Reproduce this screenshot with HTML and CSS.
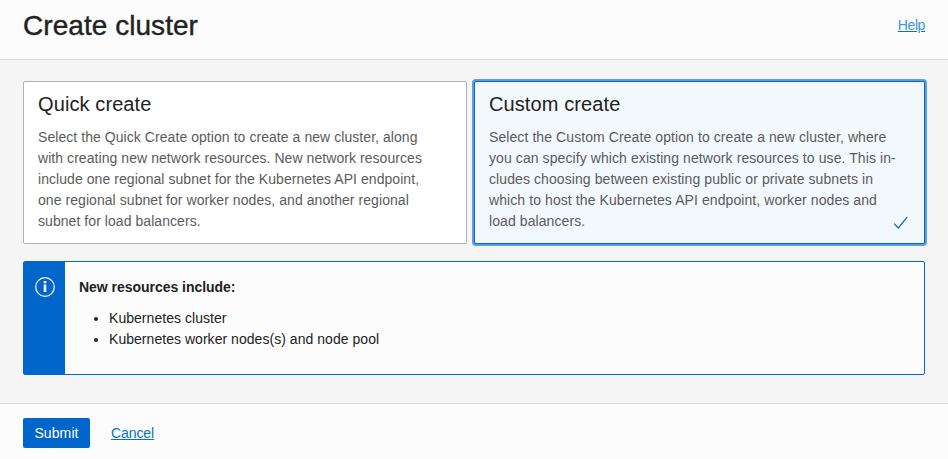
FILE: index.html
```html
<!DOCTYPE html>
<html lang="en">
<head>
<meta charset="utf-8">
<title>Create cluster</title>
<link rel="stylesheet" href="styles.css">
</head>
<body>
<header class="header">
  <h1 class="title">Create cluster</h1>
  <a class="help" href="#">Help</a>
</header>
<main class="main">
  <div class="options">
    <section class="card">
      <h2 class="card-title">Quick create</h2>
      <p class="card-text">Select the Quick Create option to create a new cluster, along<br>with creating new network resources. New network resources<br>include one regional subnet for the Kubernetes API endpoint,<br>one regional subnet for worker nodes, and another regional<br>subnet for load balancers.</p>
    </section>
    <section class="card card-selected">
      <h2 class="card-title">Custom create</h2>
      <p class="card-text">Select the Custom Create option to create a new cluster, where<br>you can specify which existing network resources to use. This in-<br>cludes choosing between existing public or private subnets in<br>which to host the Kubernetes API endpoint, worker nodes and<br>load balancers.</p>
      <svg class="check" width="16" height="14" viewBox="0 0 16 14"><path d="M1.2 7.6 5.2 12 14.2 1.2" fill="none" stroke="#0572ce" stroke-width="1.3"/></svg>
    </section>
  </div>
  <section class="info">
    <div class="info-side">
      <svg width="20" height="20" viewBox="0 0 20 20"><circle cx="10" cy="10" r="9.3" fill="none" stroke="#fff" stroke-width="1.2"/><path d="M8.7 4h2.6v2.2H8.7zM8.7 7.6h2.6v7.4H8.7z" fill="#fff"/></svg>
    </div>
    <div class="info-body">
      <p class="info-title">New resources include:</p>
      <ul class="info-list">
        <li>Kubernetes cluster</li>
        <li>Kubernetes worker nodes(s) and node pool</li>
      </ul>
    </div>
  </section>
</main>
<footer class="footer">
  <button class="submit" type="button">Submit</button>
  <a class="cancel" href="#">Cancel</a>
</footer>
</body>
</html>
```
FILE: styles.css
```css
* { box-sizing: border-box; }
body {
  margin: 0;
  height: 459px;
  display: flex;
  flex-direction: column;
  overflow: hidden;
  background: #f5f5f5;
  color: #222;
  font: 14px/21px "Liberation Sans", Arial, sans-serif;
}
h1, h2, p, ul { margin: 0; font-weight: 400; }
.header {
  height: 60px;
  padding: 0 23px;
  display: flex;
  justify-content: space-between;
  background: #fcfcfc;
  border-bottom: 1px solid #dedede;
}
.title {
  font-size: 28px;
  line-height: 34px;
  margin-top: 9px;
  letter-spacing: 0.05px;
  -webkit-text-stroke: 0.4px #222;
}
.help {
  color: #3f93da;
  text-decoration-color: #0572ce;
  letter-spacing: -0.4px;
  margin-top: 15px;
}
.main { height: 343px; padding: 21px 23px 0; }
.options { display: flex; gap: 7px; }
.card {
  width: 444px;
  height: 163px;
  padding: 10px 14px;
  background: #fff;
  border: 1px solid #aeb2b9;
  border-radius: 2px;
}
.card-selected {
  position: relative;
  width: 451px;
  background: #f3f8fd;
  border-color: #0066cc;
  box-shadow: 0 0 0 2px #5e9ee0;
}
.card-title {
  font-size: 20px;
  line-height: 24px;
  margin-bottom: 11px;
  letter-spacing: 0.1px;
}
.card-text { color: #5b5b5b; white-space: nowrap; letter-spacing: 0.06px; }
.card-selected .card-text { letter-spacing: 0.085px; }
.check { position: absolute; right: 15px; bottom: 13px; }
.info {
  display: flex;
  height: 114px;
  margin-top: 17px;
  background: #fcfcfc;
  border: 1px solid #0066cc;
  border-radius: 2px;
}
.info-side { width: 41px; padding: 15px 0 0 11px; background: #0066cc; }
.info-side svg { display: block; }
.info-body { padding: 15px 14px; }
.info-title { font-weight: 700; letter-spacing: -0.03px; }
.info-list { margin-top: 10px; padding-left: 30px; letter-spacing: 0.04px; }
.footer {
  height: 56px;
  padding: 14px 23px;
  display: flex;
  gap: 21px;
  background: #fcfcfc;
  border-top: 1px solid #dedede;
}
.submit {
  width: 67px;
  height: 30px;
  padding: 0;
  border: 0;
  border-radius: 2px;
  background: #0066cc;
  color: #fff;
  font: inherit;
  letter-spacing: 0.1px;
}
.cancel { color: #0572ce; line-height: 30px; letter-spacing: -0.08px; }
```
